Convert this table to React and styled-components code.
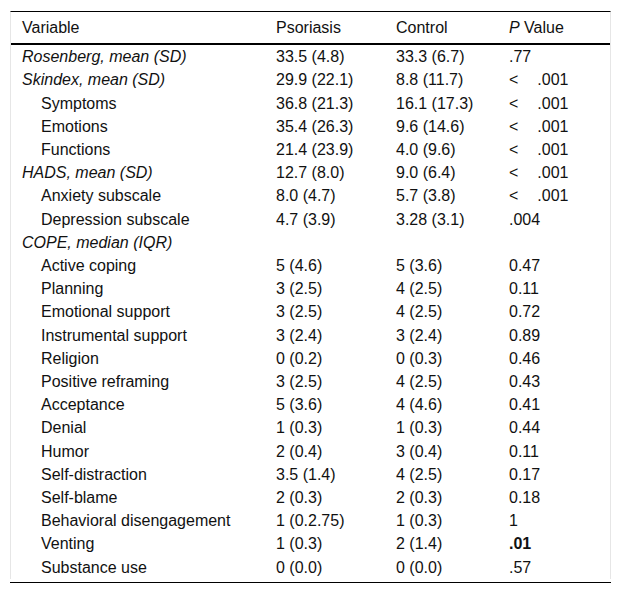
import React from "react"
import styled, { createGlobalStyle } from "styled-components"

const GlobalStyle = createGlobalStyle`
body {
    margin: 0;
    background: #fff;
    font-family: "Liberation Sans", Arial, sans-serif;
    color: #111;
}
`

const rows = [
    { name: "Rosenberg, mean (SD)", head: true, a: "33.5 (4.8)", b: "33.3 (6.7)", p: ".77" },
    { name: "Skindex, mean (SD)", head: true, a: "29.9 (22.1)", b: "8.8 (11.7)", p: ".001", lt: true },
    { name: "Symptoms", a: "36.8 (21.3)", b: "16.1 (17.3)", p: ".001", lt: true },
    { name: "Emotions", a: "35.4 (26.3)", b: "9.6 (14.6)", p: ".001", lt: true },
    { name: "Functions", a: "21.4 (23.9)", b: "4.0 (9.6)", p: ".001", lt: true },
    { name: "HADS, mean (SD)", head: true, a: "12.7 (8.0)", b: "9.0 (6.4)", p: ".001", lt: true },
    { name: "Anxiety subscale", a: "8.0 (4.7)", b: "5.7 (3.8)", p: ".001", lt: true },
    { name: "Depression subscale", a: "4.7 (3.9)", b: "3.28 (3.1)", p: ".004" },
    { name: "COPE, median (IQR)", head: true, a: "", b: "", p: "" },
    { name: "Active coping", a: "5 (4.6)", b: "5 (3.6)", p: "0.47" },
    { name: "Planning", a: "3 (2.5)", b: "4 (2.5)", p: "0.11" },
    { name: "Emotional support", a: "3 (2.5)", b: "4 (2.5)", p: "0.72" },
    { name: "Instrumental support", a: "3 (2.4)", b: "3 (2.4)", p: "0.89" },
    { name: "Religion", a: "0 (0.2)", b: "0 (0.3)", p: "0.46" },
    { name: "Positive reframing", a: "3 (2.5)", b: "4 (2.5)", p: "0.43" },
    { name: "Acceptance", a: "5 (3.6)", b: "4 (4.6)", p: "0.41" },
    { name: "Denial", a: "1 (0.3)", b: "1 (0.3)", p: "0.44" },
    { name: "Humor", a: "2 (0.4)", b: "3 (0.4)", p: "0.11" },
    { name: "Self-distraction", a: "3.5 (1.4)", b: "4 (2.5)", p: "0.17" },
    { name: "Self-blame", a: "2 (0.3)", b: "2 (0.3)", p: "0.18" },
    { name: "Behavioral disengagement", a: "1 (0.2.75)", b: "1 (0.3)", p: "1" },
    { name: "Venting", a: "1 (0.3)", b: "2 (1.4)", p: ".01", bold: true },
    { name: "Substance use", a: "0 (0.0)", b: "0 (0.0)", p: ".57" },
]

export default function App() {
    return (
        <Page>
            <GlobalStyle />
            <Frame>
                <Table>
                    <colgroup>
                        <col style={{ width: 254 }} />
                        <col style={{ width: 120 }} />
                        <col style={{ width: 113 }} />
                        <col style={{ width: 112 }} />
                    </colgroup>
                    <thead>
                        <tr>
                            <HeadCell>Variable</HeadCell>
                            <HeadCell>Psoriasis</HeadCell>
                            <HeadCell>Control</HeadCell>
                            <HeadCell><i>P</i> Value</HeadCell>
                        </tr>
                    </thead>
                    <tbody>
                        {rows.map(r => (
                            <tr key={r.name}>
                                <NameCell head={r.head}>{r.name}</NameCell>
                                <Cell>{r.a}</Cell>
                                <Cell>{r.b}</Cell>
                                <Cell bold={r.bold}>
                                    {r.lt ? <Lt>&lt;</Lt> : null}
                                    {r.p}
                                </Cell>
                            </tr>
                        ))}
                    </tbody>
                </Table>
            </Frame>
            <BottomRule />
        </Page>
    )
}

const Page = styled.div`
padding: 11px 10px 0 10px;
width: 601px;
`

const Frame = styled.div`
border-left: 1px solid #e6e6e6;
border-right: 1px solid #e6e6e6;
border-top: 1px solid #000;
`

const Table = styled.table`
width: 599px;
table-layout: fixed;
border-collapse: collapse;
font-size: 16px;
line-height: 19.2px;
`

const HeadCell = styled.th`
text-align: left;
font-weight: 400;
padding: 6px 0 6px 11px;
border-bottom: 2px solid #000;
white-space: nowrap;
`

const Cell = styled.td`
padding: 2px 0 2px 11px;
white-space: nowrap;
font-weight: ${props => props.bold ? 700 : 400};
`

const NameCell = styled(Cell)`
padding-left: ${props => props.head ? '11px' : '30px'};
font-style: ${props => props.head ? 'italic' : 'normal'};
`

const Lt = styled.span`
display: inline-block;
margin-right: 19px;
`

const BottomRule = styled.div`
margin-top: 3px;
height: 1px;
background: #000;
`
